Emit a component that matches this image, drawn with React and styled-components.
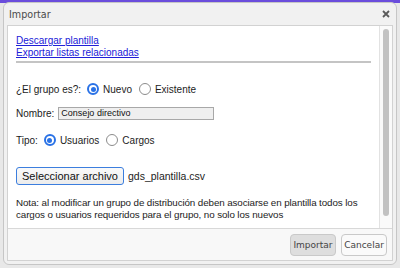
import React from 'react';
import styled, { createGlobalStyle } from 'styled-components';

const GlobalStyle = createGlobalStyle`
  html, body {
    margin: 0;
    padding: 0;
  }
  body {
    width: 400px;
    height: 268px;
    overflow: hidden;
    font-family: 'Liberation Sans', Arial, sans-serif;
    background: linear-gradient(#6a4ddc 0, #6a4ddc 3px, #e8e8e8 3px);
  }
`;

const Page = styled.div`
  padding: 2px 3px 0;
`;

const Dialog = styled.div`
  height: 263px;
  box-sizing: border-box;
  display: flex;
  flex-direction: column;
  background: #f1f1f1;
  border: 1px solid #c6c6c6;
  border-radius: 6px;
  padding: 0 3px 3px;
`;

const TitleBar = styled.div`
  height: 22px;
  display: flex;
  align-items: center;
  justify-content: space-between;
  padding: 0 3px 0 2px;
`;

const Title = styled.span`
  font-family: 'DejaVu Sans', sans-serif;
  font-size: 9.6px;
  color: #4a4a4a;
`;

const Close = styled.button`
  border: 0;
  background: none;
  padding: 0;
  width: 8px;
  height: 8px;
  display: flex;
  cursor: pointer;
`;

const Panel = styled.div`
  flex: 1;
  display: flex;
  flex-direction: column;
  border: 1px solid #d2d2d2;
  background: #fff;
`;

const Body = styled.div`
  flex: 1;
  display: flex;
  min-height: 0;
`;

const Content = styled.div`
  flex: 1;
  padding: 9px 1px 0 8px;
  font-size: 10px;
  color: #1c1c1c;
`;

const Track = styled.div`
  width: 12px;
  border-left: 1px solid #e2e2e2;
  background: #fafafa;
  padding-top: 3px;
  display: flex;
  justify-content: center;
`;

const Thumb = styled.div`
  width: 6px;
  height: 187px;
  border-radius: 3px;
  background: #c2c2c2;
`;

const Links = styled.div`
  display: flex;
  flex-direction: column;
  line-height: 11.5px;
`;

const Link = styled.a`
  color: #2020d8;
  text-decoration: underline;
  align-self: flex-start;
`;

const Separator = styled.div`
  height: 2px;
  margin: 3px 7px 0 0;
  background: #c4c4c4;
`;

const Row = styled.div`
  display: flex;
  align-items: center;
  height: ${p => p.$h || 14}px;
  margin-top: ${p => p.$mt}px;
`;

const Label = styled.span`
  margin-right: ${p => p.$gap || 4}px;
`;

const Radio = styled.span`
  box-sizing: border-box;
  width: 12px;
  height: 12px;
  border-radius: 50%;
  background: #fff;
  border: ${p => (p.$checked ? '2px solid #2a72e6' : '1px solid #8c8c8c')};
  display: flex;
  align-items: center;
  justify-content: center;
  margin-right: 4px;
  &::after {
    content: '';
    width: 5px;
    height: 5px;
    border-radius: 50%;
    background: ${p => (p.$checked ? '#2a72e6' : 'transparent')};
  }
`;

const Option = styled.span`
  margin-right: 7px;
`;

const TextInput = styled.input`
  box-sizing: border-box;
  width: 156px;
  height: 13px;
  margin-left: 0;
  padding: 0 2px;
  border: 1px solid #a8a8a8;
  background: #efefef;
  font-family: 'Liberation Sans', Arial, sans-serif;
  font-size: 9px;
  color: #111;
  outline: none;
`;

const FileButton = styled.button`
  box-sizing: border-box;
  width: 108px;
  height: 18px;
  padding: 0;
  border: 1px solid #3c7ede;
  border-radius: 3px;
  background: linear-gradient(#fafafa, #ececec);
  font-family: 'Liberation Sans', Arial, sans-serif;
  font-size: 11px;
  color: #111;
`;

const FileName = styled.span`
  margin-left: 4px;
  font-size: 10.5px;
`;

const Note = styled.p`
  margin: 12px 0 0;
  line-height: 12px;
  font-size: 9.8px;
  letter-spacing: -0.1px;
`;

const Footer = styled.div`
  height: 31px;
  border-top: 1px solid #d8d8d8;
  background: #f8f8f8;
  display: flex;
  align-items: center;
  justify-content: flex-end;
  gap: 5px;
  padding-right: 5px;
`;

const FooterButton = styled.button`
  box-sizing: border-box;
  width: 46px;
  height: 22px;
  padding: 0;
  border: 1px solid #c9c9c9;
  border-radius: 4px;
  background: ${p => (p.$primary ? '#dedede' : '#fafafa')};
  font-family: 'DejaVu Sans', sans-serif;
  font-size: 9px;
  color: #444;
`;

export default function App() {
  return (
    <>
      <GlobalStyle />
      <Page>
        <Dialog>
          <TitleBar>
            <Title>Importar</Title>
            <Close aria-label="Cerrar">
              <svg width="8" height="8" viewBox="0 0 8 8">
                <path d="M1 1L7 7M7 1L1 7" stroke="#5a5a5a" strokeWidth="1.8" />
              </svg>
            </Close>
          </TitleBar>
          <Panel>
            <Body>
              <Content>
                <Links>
                  <Link href="#">Descargar plantilla</Link>
                  <Link href="#">Exportar listas relacionadas</Link>
                </Links>
                <Separator />
                <Row $mt={19}>
                  <Label $gap={6}>¿El grupo es?:</Label>
                  <Radio $checked />
                  <Option>Nuevo</Option>
                  <Radio />
                  <Option>Existente</Option>
                </Row>
                <Row $mt={10}>
                  <Label>Nombre:</Label>
                  <TextInput defaultValue="Consejo directivo" />
                </Row>
                <Row $mt={13}>
                  <Label $gap={6}>Tipo:</Label>
                  <Radio $checked />
                  <Option>Usuarios</Option>
                  <Radio />
                  <Option>Cargos</Option>
                </Row>
                <Row $mt={20} $h={18}>
                  <FileButton>Seleccionar archivo</FileButton>
                  <FileName>gds_plantilla.csv</FileName>
                </Row>
                <Note>
                  Nota: al modificar un grupo de distribución deben asociarse en plantilla todos los
                  cargos o usuarios requeridos para el grupo, no solo los nuevos
                </Note>
              </Content>
              <Track>
                <Thumb />
              </Track>
            </Body>
            <Footer>
              <FooterButton $primary>Importar</FooterButton>
              <FooterButton>Cancelar</FooterButton>
            </Footer>
          </Panel>
        </Dialog>
      </Page>
    </>
  );
}
